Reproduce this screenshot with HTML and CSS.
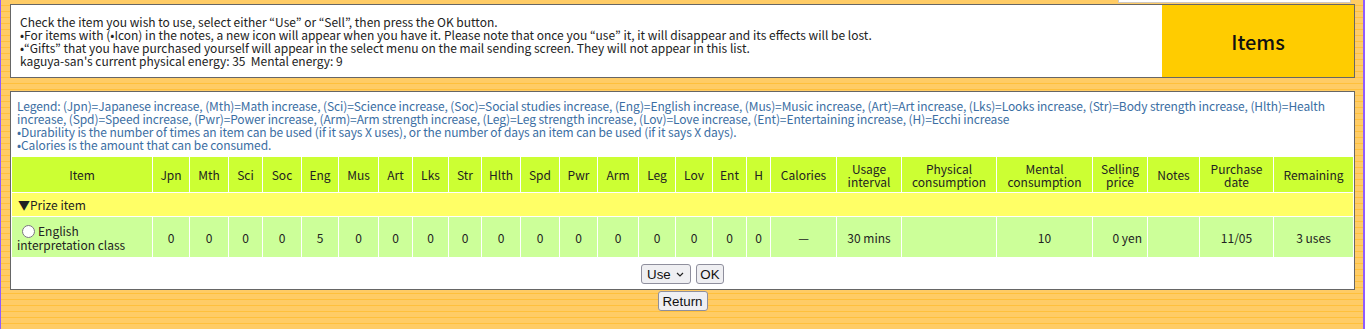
FILE: index.html
```html
<!DOCTYPE html>
<html lang="en">
<head>
  <meta charset="UTF-8">
  <title>Items</title>
  <link rel="stylesheet" href="styles.css">
</head>
<body>
  <div class="page">
    <div class="topbar"></div>

    <div class="head">
      <div class="head-text">
        <p>Check the item you wish to use, select either “Use” or “Sell”, then press the OK button.<br>
        •For items with (•Icon) in the notes, a new icon will appear when you have it. Please note that once you “use” it, it will disappear and its effects will be lost.<br>
        •“Gifts” that you have purchased yourself will appear in the select menu on the mail sending screen. They will not appear in this list.<br>
        kaguya-san's current physical energy: 35&nbsp; Mental energy: 9</p>
      </div>
      <div class="head-title">Items</div>
    </div>

    <form class="list">
      <p class="legend">Legend: (Jpn)=Japanese increase, (Mth)=Math increase, (Sci)=Science increase, (Soc)=Social studies increase, (Eng)=English increase, (Mus)=Music increase, (Art)=Art increase, (Lks)=Looks increase, (Str)=Body strength increase, (Hlth)=Health increase, (Spd)=Speed increase, (Pwr)=Power increase, (Arm)=Arm strength increase, (Leg)=Leg strength increase, (Lov)=Love increase, (Ent)=Entertaining increase, (H)=Ecchi increase<br>
      •Durability is the number of times an item can be used (if it says X uses), or the number of days an item can be used (if it says X days).<br>
      •Calories is the amount that can be consumed.</p>

      <table class="items">
        <colgroup>
          <col><col><col><col><col><col><col><col><col><col><col><col><col>
          <col><col><col><col><col><col><col><col><col><col><col><col><col>
        </colgroup>
        <thead>
          <tr>
            <th>Item</th>
            <th>Jpn</th>
            <th>Mth</th>
            <th>Sci</th>
            <th>Soc</th>
            <th>Eng</th>
            <th>Mus</th>
            <th>Art</th>
            <th>Lks</th>
            <th>Str</th>
            <th>Hlth</th>
            <th>Spd</th>
            <th>Pwr</th>
            <th>Arm</th>
            <th>Leg</th>
            <th>Lov</th>
            <th>Ent</th>
            <th>H</th>
            <th>Calories</th>
            <th>Usage<br>interval</th>
            <th>Physical<br>consumption</th>
            <th>Mental<br>consumption</th>
            <th>Selling<br>price</th>
            <th>Notes</th>
            <th>Purchase<br>date</th>
            <th>Remaining</th>
          </tr>
        </thead>
        <tbody>
          <tr class="group">
            <td colspan="26">▼Prize item</td>
          </tr>
          <tr class="item">
            <td class="name"><input type="radio" name="item" value="1">English<br>interpretation class</td>
            <td>0</td>
            <td>0</td>
            <td>0</td>
            <td>0</td>
            <td>5</td>
            <td>0</td>
            <td>0</td>
            <td>0</td>
            <td>0</td>
            <td>0</td>
            <td>0</td>
            <td>0</td>
            <td>0</td>
            <td>0</td>
            <td>0</td>
            <td>0</td>
            <td>0</td>
            <td>—</td>
            <td>30 mins</td>
            <td></td>
            <td>10</td>
            <td class="price">0 yen</td>
            <td></td>
            <td>11/05</td>
            <td>3 uses</td>
          </tr>
        </tbody>
      </table>

      <div class="controls">
        <span class="select-wrap">
          <select name="mode">
            <option>Use</option>
            <option>Sell</option>
          </select>
          <svg class="chevron" width="8" height="5" viewBox="0 0 8 5"><path d="M1 1 L4 4 L7 1" fill="none" stroke="#222" stroke-width="1.2"/></svg>
        </span>
        <button type="submit">OK</button>
      </div>
    </form>

    <div class="back">
      <button type="button">Return</button>
    </div>
  </div>
</body>
</html>
```

FILE: styles.css
```css
:root {
  --line: #666666;
  --purple: #8f5cff;
  --title: #ffcc00;
  --head: #ccff33;
  --group: #ffff66;
  --row: #ccff99;
  --legend: #3b6ea3;
  --btn: #efeff2;
  --btn-line: #8f8f9d;
}

* {
  box-sizing: border-box;
}

body {
  margin: 0;
  min-height: 329px;
  font-family: "Noto Sans CJK JP", "Noto Sans", sans-serif;
  font-size: 12px;
  line-height: 13px;
  color: #222;
  border-left: 1px solid var(--purple);
  border-right: 2px solid var(--purple);
  background-color: #ffcc66;
  background-image: repeating-linear-gradient(to bottom, #ffcc66 0, #ffcc66 5px, #ffc03c 5px, #ffc03c 6px);
}

p {
  margin: 0;
}

.page {
  padding: 0 8px 0 9px;
}

.topbar {
  width: 233px;
  height: 3px;
  margin: 0 4px 0 auto;
  background: #fff;
  border: 1px solid #cfc8c0;
  border-top: none;
}

.head {
  display: flex;
  height: 74px;
  margin-top: 1px;
  border: 1px solid var(--line);
  background: #fff;
}

.head-text {
  flex: 1;
  display: flex;
  align-items: center;
  padding: 0 9px;
}

.head-title {
  width: 192px;
  display: flex;
  align-items: center;
  justify-content: center;
  background: var(--title);
  font-size: 20px;
  font-weight: 500;
  color: #111;
}

.list {
  margin: 13px 0 0;
  border: 1px solid var(--line);
  background: #fff;
  padding: 7px 0 0;
}

.legend {
  padding: 0 0 0 6px;
  color: var(--legend);
  letter-spacing: -0.1px;
  margin-bottom: 5px;
}

.items {
  width: 100%;
  table-layout: fixed;
  border-collapse: collapse;
}

.items th,
.items td {
  border: 1px solid #fff;
  padding: 0;
  text-align: center;
  font-weight: normal;
}

.items th {
  height: 36px;
  background: var(--head);
}

.items col:nth-child(1) { width: 141px; }
.items col:nth-child(2) { width: 37px; }
.items col:nth-child(3) { width: 39px; }
.items col:nth-child(4) { width: 34px; }
.items col:nth-child(5) { width: 39px; }
.items col:nth-child(6) { width: 37px; }
.items col:nth-child(7) { width: 40px; }
.items col:nth-child(8) { width: 34px; }
.items col:nth-child(9) { width: 36px; }
.items col:nth-child(10) { width: 33px; }
.items col:nth-child(11) { width: 39px; }
.items col:nth-child(12) { width: 39px; }
.items col:nth-child(13) { width: 38px; }
.items col:nth-child(14) { width: 41px; }
.items col:nth-child(15) { width: 37px; }
.items col:nth-child(16) { width: 37px; }
.items col:nth-child(17) { width: 34px; }
.items col:nth-child(18) { width: 24px; }
.items col:nth-child(19) { width: 66px; }
.items col:nth-child(20) { width: 65px; }
.items col:nth-child(21) { width: 95px; }
.items col:nth-child(22) { width: 96px; }
.items col:nth-child(23) { width: 55px; }
.items col:nth-child(24) { width: 52px; }
.items col:nth-child(25) { width: 74px; }
.items col:nth-child(26) { width: 80px; }

.items .group td {
  height: 24px;
  background: var(--group);
  text-align: left;
  padding-left: 6px;
}

.items .item td {
  height: 41px;
  background: var(--row);
}

.items .item .name {
  text-align: left;
  padding-left: 5px;
}

.items .item .name input {
  width: 13px;
  height: 13px;
  margin: 0 3px 0 5px;
  vertical-align: -2px;
}

.items .item .price {
  text-align: right;
  padding-right: 5px;
}

.controls {
  display: flex;
  justify-content: center;
  gap: 5px;
  padding: 6px 0 5px;
}

.controls select,
.controls button,
.back button {
  font-family: "Liberation Sans", Arial, sans-serif;
  font-size: 13.33px;
  height: 20px;
  color: #111;
  background: var(--btn);
  border: 1px solid var(--btn-line);
  border-radius: 3px;
}

.select-wrap {
  position: relative;
  display: inline-block;
}

.controls select {
  width: 50px;
  padding: 0 0 0 5px;
  appearance: none;
  -webkit-appearance: none;
}

.chevron {
  position: absolute;
  right: 7px;
  top: 8px;
  pointer-events: none;
}

.controls button {
  width: 28px;
  padding: 0;
}

.back {
  display: flex;
  justify-content: center;
  padding-top: 1px;
}

.back button {
  width: 50px;
  padding: 0;
}
```
